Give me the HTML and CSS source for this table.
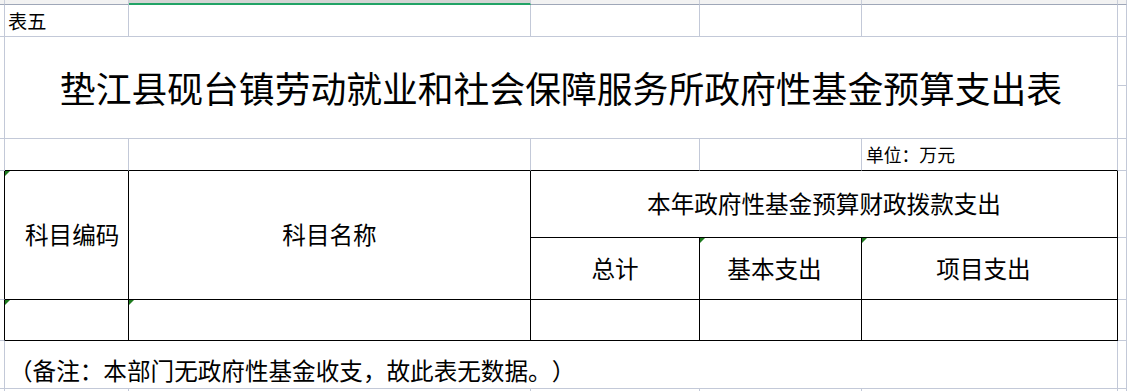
FILE: index.html
```html
<!DOCTYPE html>
<html lang="zh-CN">
<head>
<meta charset="utf-8">
<title>政府性基金预算支出表</title>
<link rel="stylesheet" href="styles.css">
</head>
<body>
<div class="sheet">
  <div class="hd"></div>
  <div class="hd"></div>
  <div class="hd hd-sel"></div>
  <div class="hd"></div>
  <div class="hd"></div>
  <div class="hd"></div>
  <div class="hd"></div>

  <div class="c"></div>
  <div class="c label-top">表五</div>
  <div class="c"></div>
  <div class="c"></div>
  <div class="c"></div>
  <div class="c"></div>
  <div class="c"></div>

  <div class="c rows2"></div>
  <div class="c title">垫江县砚台镇劳动就业和社会保障服务所政府性基金预算支出表</div>
  <div class="c"></div>
  <div class="c"></div>

  <div class="c"></div>
  <div class="c bb"></div>
  <div class="c bb"></div>
  <div class="c bb"></div>
  <div class="c bb"></div>
  <div class="c bb unit">单位：万元</div>
  <div class="c"></div>

  <div class="c rows2 br"></div>
  <div class="c t rows2 hcell code mark">科目编码</div>
  <div class="c t rows2 hcell">科目名称</div>
  <div class="c t cols3 hcell">本年政府性基金预算财政拨款支出</div>
  <div class="c"></div>

  <div class="c t hcell">总计</div>
  <div class="c t hcell shift mark">基本支出</div>
  <div class="c t hcell shift mark">项目支出</div>
  <div class="c"></div>

  <div class="c br"></div>
  <div class="c t mark"></div>
  <div class="c t mark"></div>
  <div class="c t"></div>
  <div class="c t"></div>
  <div class="c t"></div>
  <div class="c"></div>

  <div class="c"></div>
  <div class="c cols5 note">（备注：本部门无政府性基金收支，故此表无数据。）</div>
  <div class="c"></div>

  <div class="c last"></div>
  <div class="c last"></div>
  <div class="c last"></div>
  <div class="c last"></div>
  <div class="c last"></div>
  <div class="c last"></div>
  <div class="c last"></div>
</div>
</body>
</html>
```

FILE: styles.css
```css
html, body {
  margin: 0;
  padding: 0;
  background: #ffffff;
}

body {
  width: 1127px;
  height: 391px;
  overflow: hidden;
  font-family: "Noto Sans CJK SC", "Noto Sans", sans-serif;
  color: #000000;
  font-kerning: none;
  text-spacing-trim: space-all;
}

.sheet {
  display: grid;
  grid-template-columns: 5px 124px 402px 169px 162px 256px 1fr;
  grid-template-rows: 5px 32px 49px 53px 32px 67px 62px 41px 48px 1fr;
  width: 1127px;
  height: 391px;
}

.hd {
  box-sizing: border-box;
  background: #f2f2f2;
  border-right: 1px solid #c9ceda;
  border-bottom: 1px solid #9fa7b8;
}

.hd-sel {
  background: #d4d4d4;
  border-bottom: 2px solid #21a366;
}

.c {
  box-sizing: border-box;
  position: relative;
  border-right: 1px solid #c3c9d8;
  border-bottom: 1px solid #c3c9d8;
  display: flex;
  align-items: center;
  line-height: 1;
  white-space: nowrap;
  min-width: 0;
}

.rows2 {
  grid-row: span 2;
}

.cols3 {
  grid-column: span 3;
}

.cols5 {
  grid-column: span 5;
}

.br {
  border-right-color: #000000;
}

.bb {
  border-bottom-color: #000000;
}

.t {
  border-right-color: #000000;
  border-bottom-color: #000000;
}

.last {
  border-bottom: none;
}

.label-top {
  align-items: flex-end;
  padding: 0 0 5px 3px;
  font-size: 19.2px;
}

.title {
  grid-column: span 5;
  grid-row: span 2;
  justify-content: center;
  font-size: 35.8px;
}

.unit {
  padding-left: 4px;
  font-size: 17.8px;
}

.hcell {
  justify-content: center;
  font-size: 23.6px;
}

.code {
  justify-content: flex-start;
  padding-left: 20px;
}

.shift {
  padding-right: 12px;
}

.note {
  align-items: flex-end;
  padding: 0 0 5px 4px;
  font-size: 23.6px;
}

.mark::before {
  content: "";
  position: absolute;
  top: 0;
  left: 0;
  width: 0;
  height: 0;
  border-top: 5px solid #1e7b1e;
  border-right: 5px solid transparent;
}
```
